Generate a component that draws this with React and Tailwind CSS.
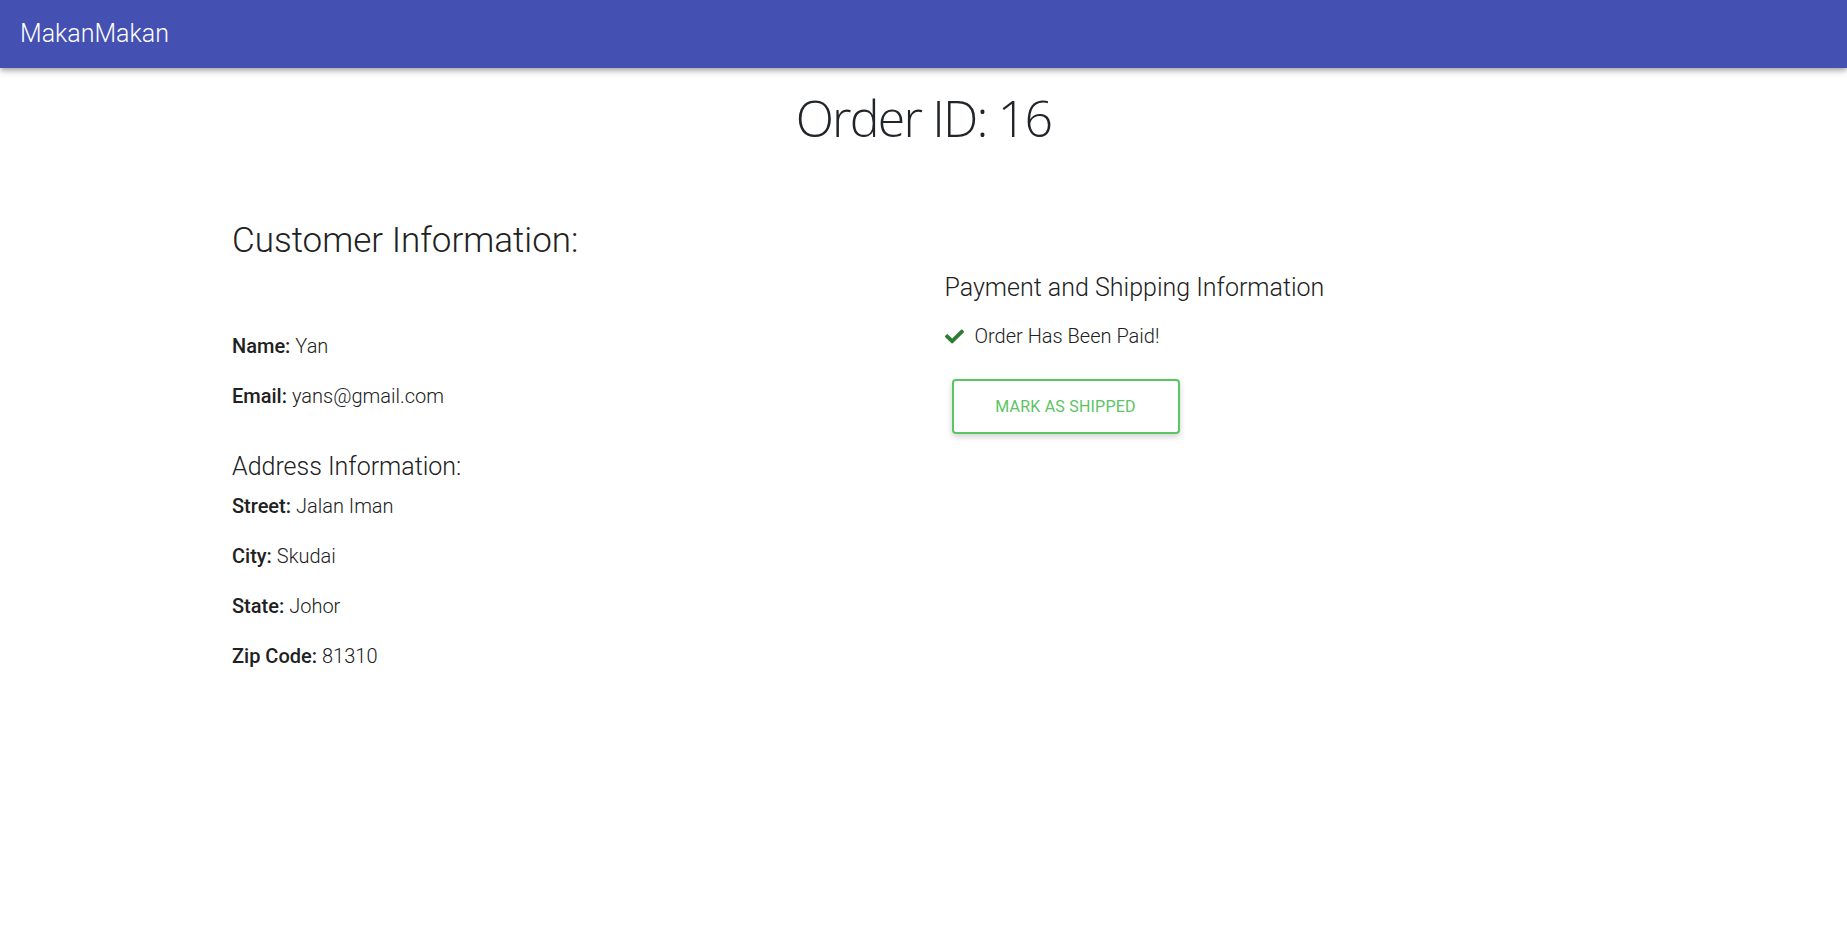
import React from "react";
import { FaCheck } from "react-icons/fa";

function Row({ label, value }) {
  return (
    <div className="h-[50px] leading-[50px] text-[20px] text-[#212121]">
      <span className="font-medium">{label}</span>{" "}
      <span className="font-light">{value}</span>
    </div>
  );
}

export default function App() {
  return (
    <div className="min-h-[925px] bg-white" style={{ fontFamily: "Roboto, 'Liberation Sans', sans-serif" }}>
      <header className="h-[68px] bg-[#4451b2] flex items-center px-[20px] shadow-[0_2px_4px_-1px_rgba(0,0,0,0.2),0_4px_5px_0_rgba(0,0,0,0.14),0_1px_10px_0_rgba(0,0,0,0.12)]">
        <span className="text-white text-[25px] font-light">MakanMakan</span>
      </header>

      <h1
        className="mt-[20px] text-center text-[50px] leading-[60px] tracking-[-1.8px] font-light text-[#212529]"
        style={{ fontFamily: "'Open Sans', sans-serif" }}
      >
        Order ID: 16
      </h1>

      <div className="mx-auto w-[1383px] grid grid-cols-2 mt-[73px]">
        <div>
          <h2 className="text-[35px] leading-[40px] font-light text-[#212121]">Customer Information:</h2>
          <div className="mt-[60px]">
            <Row label="Name:" value="Yan" />
            <Row label="Email:" value="yans@gmail.com" />
          </div>
          <h3 className="mt-[31px] text-[25px] leading-[29px] font-light text-[#212121]">Address Information:</h3>
          <div>
            <Row label="Street:" value="Jalan Iman" />
            <Row label="City:" value="Skudai" />
            <Row label="State:" value="Johor" />
            <Row label="Zip Code:" value="81310" />
          </div>
        </div>

        <div className="pl-[21px] pt-[52px]">
          <h3 className="text-[25px] leading-[30px] font-light text-[#212121]">Payment and Shipping Information</h3>
          <div className="mt-[18px] h-[30px] flex items-center gap-[11px] text-[20px] font-light text-[#212121]">
            <FaCheck className="text-[#2e7d32] w-[19px] h-[19px]" />
            <span>Order Has Been Paid!</span>
          </div>
          <button className="mt-[28px] ml-[7px] w-[228px] h-[55px] border-2 border-[#5cc563] rounded-[4px] bg-white text-[#5cc563] text-[16px] tracking-[0.2px] font-normal uppercase shadow-[0_3px_6px_rgba(0,0,0,0.18)]">
            Mark as Shipped
          </button>
        </div>
      </div>
    </div>
  );
}
